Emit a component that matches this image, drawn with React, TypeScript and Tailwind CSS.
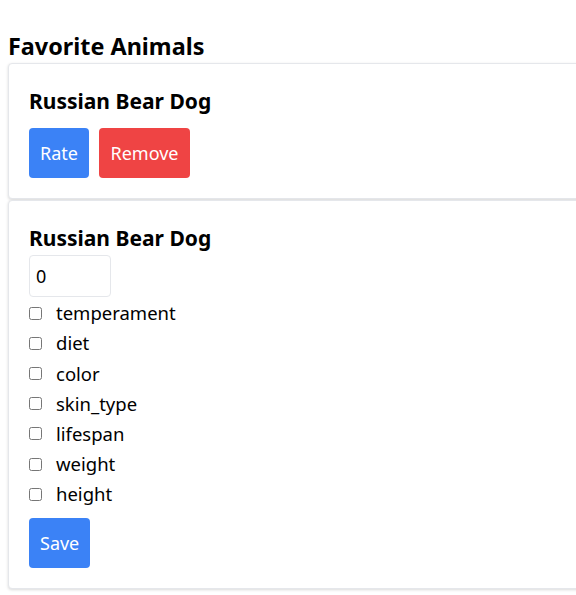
import React from "react";

const attrs = ["temperament", "diet", "color", "skin_type", "lifespan", "weight", "height"];

export default function App() {
  return (
    <div className="w-[576px] h-[595px] overflow-hidden bg-white text-black" style={{ fontFamily: '"Noto Sans", "Open Sans", sans-serif' }}>
      <div className="pl-2 pt-[29px] w-[640px]">
        <h2 className="text-[23.4px] font-bold leading-[34px] m-0">Favorite Animals</h2>
        <div className="border border-[#e5e7eb] rounded-[4px] shadow-[0_1px_3px_rgba(0,0,0,0.15)] p-5 bg-white">
          <h3 className="text-[21px] font-bold leading-[34px] m-0">Russian Bear Dog</h3>
          <div className="flex gap-2.5 mt-2.5">
            <button className="bg-[#3b82f6] text-white text-[18px] h-[50px] px-[11px] rounded-[4px]">Rate</button>
            <button className="bg-[#ef4444] text-white text-[18px] h-[50px] px-[11.5px] rounded-[4px]">Remove</button>
          </div>
        </div>
        <div className="mt-[1px] border border-[#e5e7eb] rounded-[4px] shadow-[0_1px_3px_rgba(0,0,0,0.15)] p-5 bg-white">
          <h3 className="text-[21px] font-bold leading-[34px] m-0">Russian Bear Dog</h3>
          <input
            type="number"
            defaultValue={0}
            className="block w-[82px] h-[42px] border border-[#e5e7eb] rounded-[4px] px-[6px] text-[18px] outline-none"
          />
          <div className="flex flex-col mt-[1px]">
            {attrs.map((a) => (
              <label key={a} className="flex items-center h-[30.2px] text-[18.5px]">
                <input type="checkbox" className="m-0 w-[13px] h-[13px] mr-[14px]" />
                <span>{a}</span>
              </label>
            ))}
          </div>
          <button className="mt-[9px] bg-[#3b82f6] text-white text-[18px] h-[50px] px-[11px] rounded-[4px]">Save</button>
        </div>
      </div>
    </div>
  );
}
